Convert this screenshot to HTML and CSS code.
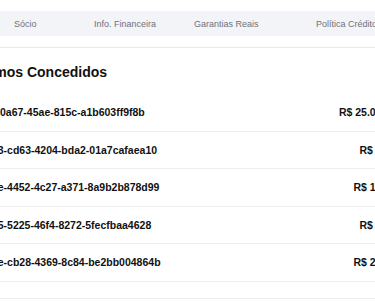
FILE: index.html
```html
<!DOCTYPE html>
<html lang="pt-BR">
  <head>
    <meta charset="UTF-8" />
    <meta name="viewport" content="width=device-width, initial-scale=1.0" />
    <title>Empréstimos Concedidos</title>
    <link rel="stylesheet" href="styles.css">
  </head>
  <body>
    <div class="topo">
      <nav class="abas">
        <button>Sócio</button>
        <button>Info. Financeira</button>
        <button>Garantias Reais</button>
        <button>Política Crédito</button>
      </nav>
    </div>
    <main class="pagina">
      <h1>Empréstimos Concedidos</h1>
      <section class="lista">
        <div class="linha">
          <span class="id">7cf3ef2f-0a67-45ae-815c-a1b603ff9f8b</span>
          <span class="valor">R$ 25.000,00</span>
        </div>
        <div class="linha">
          <span class="id">4e1a9c63-cd63-4204-bda2-01a7cafaea10</span>
          <span class="valor">R$ 80,00</span>
        </div>
        <div class="linha">
          <span class="id">a2c97e8e-4452-4c27-a371-8a9b2b878d99</span>
          <span class="valor">R$ 150,00</span>
        </div>
        <div class="linha">
          <span class="id">6e3a2c05-5225-46f4-8272-5fecfbaa4628</span>
          <span class="valor">R$ 90,00</span>
        </div>
        <div class="linha">
          <span class="id">8c1a94ce-cb28-4369-8c84-be2bb004864b</span>
          <span class="valor">R$ 200,00</span>
        </div>
      </section>
      <div class="rodape"></div>
    </main>
  </body>
</html>
```

FILE: styles.css
```css
html, body {
  margin: 0;
  overflow: hidden;
  background-color: white;
  font-family: "Liberation Sans", Arial, sans-serif;
}

.topo {
  padding-top: 11px;
  padding-bottom: 11px;
  border-bottom: 1px solid #e8eaee;
}

.abas {
  display: grid;
  grid-template-columns: 80px 100px 122px auto;
  height: 25px;
  padding-left: 14px;
  background-color: #f3f4f7;
}
.abas button {
  border: none;
  background: none;
  padding: 0;
  text-align: left;
  white-space: nowrap;
  font-family: inherit;
  font-size: 9px;
  color: #6b7280;
}

.pagina {
  width: 420px;
}

h1 {
  margin: 16px 0 14px -4.69em;
  font-size: 14px;
  line-height: 16px;
  color: #111;
  white-space: nowrap;
}

.linha {
  display: flex;
  justify-content: space-between;
  align-items: center;
  box-sizing: border-box;
  height: 37.5px;
  padding-right: 18px;
  border-bottom: 1px solid #eceef0;
  font-size: 10.5px;
  font-weight: bold;
  color: #111;
}
.id {
  margin-left: -4.112em;
  white-space: nowrap;
}
.valor {
  white-space: nowrap;
}

.rodape {
  margin-top: 16px;
  border-top: 1px solid #eceef0;
}
```
